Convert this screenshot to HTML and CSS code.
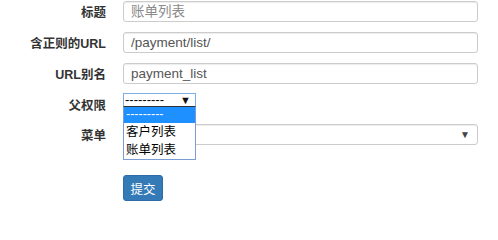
FILE: index.html
```html
<!DOCTYPE html>
<html>
<head>
<meta charset="utf-8">
<link rel="stylesheet" href="styles.css">
</head>
<body>
<form class="form">
  <div class="row">
    <label class="lbl">标题</label>
    <input class="ctl" type="text" value="" placeholder="账单列表">
  </div>
  <div class="row">
    <label class="lbl">含正则的URL</label>
    <input class="ctl" type="text" value="/payment/list/">
  </div>
  <div class="row">
    <label class="lbl">URL别名</label>
    <input class="ctl" type="text" value="payment_list">
  </div>
  <div class="row row-parent">
    <label class="lbl">父权限</label>
    <div class="mini-wrap">
      <div class="mini-select"><span>---------</span><span class="mini-arrow">▼</span></div>
      <ul class="popup">
        <li class="opt sel">---------</li>
        <li class="opt">客户列表</li>
        <li class="opt">账单列表</li>
      </ul>
    </div>
  </div>
  <div class="row">
    <label class="lbl">菜单</label>
    <div class="menu-select"><span></span><span class="menu-arrow">▼</span></div>
  </div>
  <div class="row row-btn">
    <span></span>
    <div><button class="btn" type="button">提交</button></div>
  </div>
</form>
</body>
</html>
```
FILE: styles.css
```css
* { box-sizing: border-box; }
body {
  margin: 0;
  font-family: "Liberation Sans", "Noto Sans CJK SC", sans-serif;
  font-size: 13px;
  color: #333;
  background: #fff;
}
.form {
  width: 478px;
  padding-top: 1px;
}
.row {
  display: grid;
  grid-template-columns: 106px 1fr;
  column-gap: 17px;
  margin-bottom: 10px;
  height: 21px;
}
.lbl {
  text-align: right;
  font-weight: bold;
  font-size: 12.5px;
  line-height: 24px;
  color: #333;
  white-space: nowrap;
}
.ctl {
  height: 21px;
  border: 1px solid #ccc;
  border-radius: 3px;
  padding: 0 7px;
  font: inherit;
  font-size: 13.5px;
  color: #555;
  box-shadow: inset 0 1px 1px rgba(0,0,0,.075);
  outline: none;
}
.ctl::placeholder { color: #8a8a8a; }
.row-parent { margin-bottom: 9px; }
.mini-wrap {
  position: relative;
}
.mini-select {
  width: 73px;
  height: 14px;
  margin-top: -1px;
  border: 1px solid #7eaee8;
  border-bottom: 1px solid #333;
  display: flex;
  justify-content: space-between;
  align-items: center;
  padding: 0 4px 0 1px;
  font-size: 13px;
  color: #000;
  line-height: 12px;
  background: #fff;
}
.mini-arrow { font-size: 11px; color: #111; }
.popup {
  position: absolute;
  left: 0;
  top: 13px;
  width: 73px;
  margin: 0;
  padding: 0;
  list-style: none;
  background: #fff;
  border: 1px solid #7a9cd3;
  border-top: none;
  z-index: 2;
}
.opt {
  height: 18px;
  line-height: 18px;
  padding-left: 2px;
  color: #000;
  font-size: 12.5px;
}
.opt.sel {
  background: #1e90ff;
  color: #fff;
  height: 16px;
  line-height: 14px;
}
.menu-select {
  height: 21px;
  border: 1px solid #ccc;
  border-radius: 3px;
  display: flex;
  justify-content: space-between;
  align-items: center;
  padding: 0 7px;
  box-shadow: inset 0 1px 1px rgba(0,0,0,.075);
}
.menu-arrow { font-size: 10px; color: #444; }
.row-btn { margin-top: 30px; height: 26px; }
.btn {
  height: 26px;
  width: 40px;
  padding: 0;
  border: 1px solid #2e6da4;
  border-radius: 3px;
  background: #337ab7;
  color: #fff;
  font: inherit;
  font-size: 12.5px;
}
```
